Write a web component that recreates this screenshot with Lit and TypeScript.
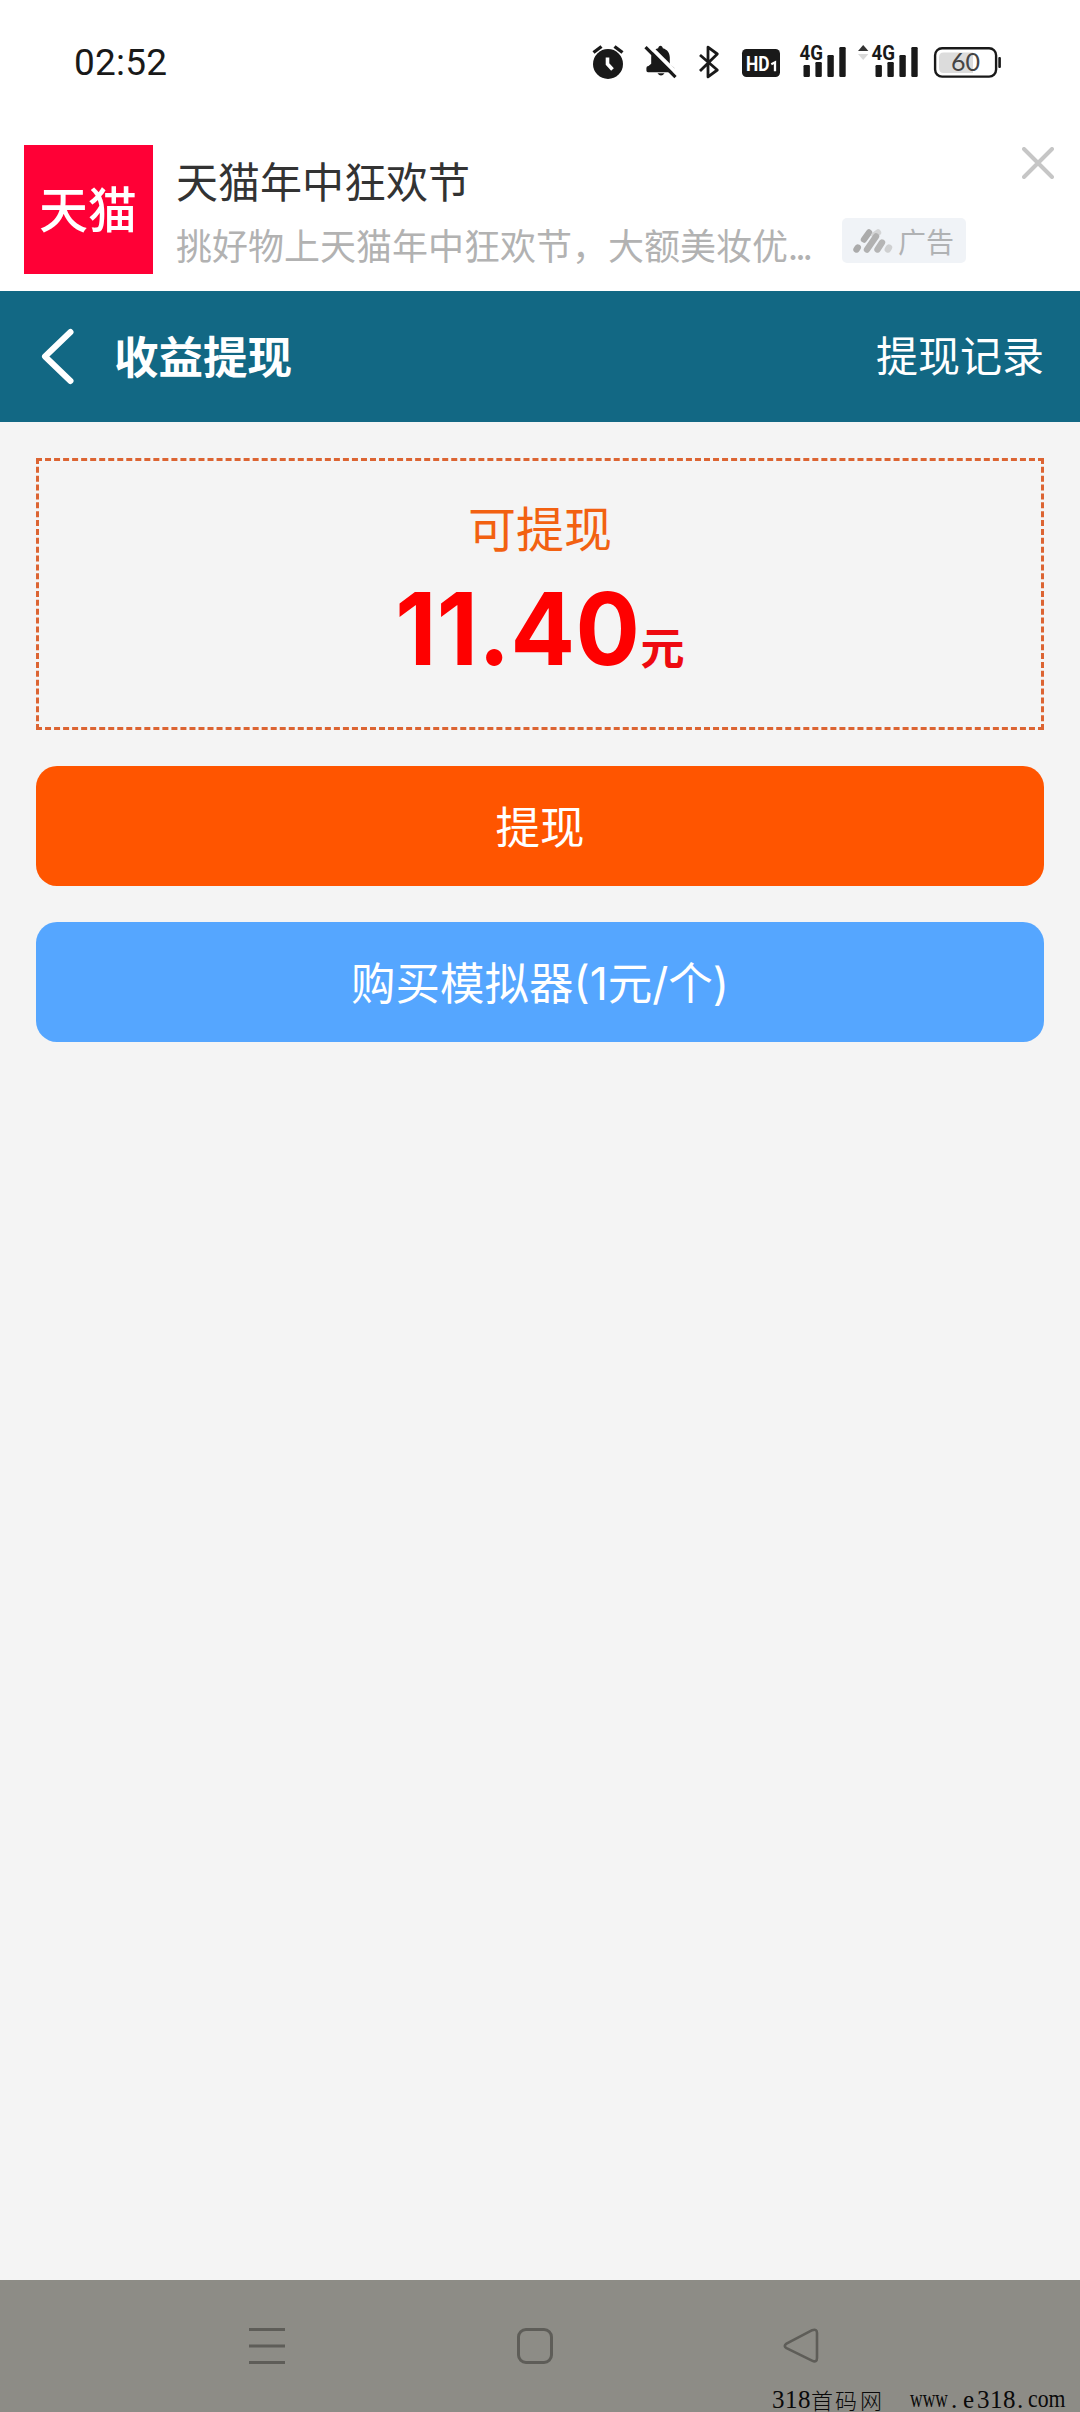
import { LitElement, html, css, svg } from "lit";
import { customElement } from "lit/decorators.js";

/** Status bar: clock on the left, device indicators on the right. */
@customElement("status-bar")
class StatusBar extends LitElement {
  static styles = css`
    :host {
      display: flex;
      box-sizing: border-box;
      height: 125px;
      padding: 42px 76px 0 74px;
      justify-content: space-between;
      align-items: flex-start;
      background: #fff;
      color: #191919;
    }
    .time {
      padding-top: 1px;
      font: 400 37px/40px Roboto, sans-serif;
      letter-spacing: 0.2px;
    }
    .icons {
      display: flex;
    }
    svg {
      display: block;
      height: 40px;
    }
    .hd {
      font: 700 21px Roboto, sans-serif;
    }
    .gen {
      font: 700 21px Roboto, sans-serif;
    }
    .level {
      font: 400 25px Lato, sans-serif;
    }
  `;

  private icon(x: number, width: number, body: unknown) {
    return html`<svg width=${width} viewBox="${x} 42 ${width} 40" fill="#191919">${body}</svg>`;
  }

  private bars(dx: number) {
    return svg`<g transform="translate(${dx} 0)">
      <text class="gen" x="799.5" y="60" textLength="23.5" lengthAdjust="spacingAndGlyphs">4G</text>
      <rect x="803.5" y="65" width="6.4" height="12" rx="1.2"/>
      <rect x="815.4" y="62" width="6.4" height="15" rx="1.2"/>
      <rect x="827.4" y="55" width="6.4" height="22" rx="1.2"/>
      <rect x="839.3" y="47" width="6.4" height="30" rx="1.2"/>
    </g>`;
  }

  render() {
    return html`
      <div class="time">02:52</div>
      <div class="icons">
        ${this.icon(588, 45, svg`
          <circle cx="608" cy="64" r="15"/>
          <path d="M593.5 52.5L601.5 46.5M622.5 52.5L614.5 46.5" stroke="#191919" stroke-width="3.4" fill="none"/>
          <path d="M607.5 57.5V64L612.5 69.5" stroke="#fff" stroke-width="3.6" fill="none"/>`)}
        ${this.icon(633, 55, svg`
          <path d="M658.2 48.2C658.4 44.8 662.6 44.8 662.8 48.2C667.5 49.6 669.8 53 669.8 57.5V64.5L672.5 66.5Q674.5 67 674.5 69V72.2H648Q646.4 72.2 646.4 70.5V68Q646.4 66.2 648.5 66L651.2 63.8V57.5C651.2 53 653.5 49.6 658.2 48.2Z"/>
          <path d="M657.5 73.3H664.5Q663 75.6 661 75.6Q659 75.6 657.5 73.3Z"/>
          <path d="M647.5 44.2L678.5 75" stroke="#fff" stroke-width="4"/>
          <path d="M645.5 47.2L675.5 77.2" stroke="#191919" stroke-width="3.2"/>`)}
        ${this.icon(688, 43, svg`
          <path d="M700 55L717.3 70L708 76.8V47.2L717.3 54L700 71" fill="none" stroke="#191919" stroke-width="2.8" stroke-linejoin="round"/>`)}
        ${this.icon(731, 59, svg`
          <rect x="742" y="49" width="38" height="28" rx="4.5"/>
          <text class="hd" x="746" y="71" fill="#fff" textLength="23.5" lengthAdjust="spacingAndGlyphs">HD</text>
          <path d="M771.3 64.2L775 62.3V71.2" fill="none" stroke="#fff" stroke-width="2.3"/>`)}
        ${this.icon(790, 61, this.bars(0))}
        ${this.icon(851, 75, svg`
          <path d="M858 51L863.2 45L868.4 51Z" fill="#333"/>
          <path d="M858 54L863.2 60L868.4 54Z" fill="#d9d9d9"/>
          ${this.bars(72)}`)}
        ${this.icon(926, 78, svg`
          <rect x="935.1" y="48.2" width="61" height="28.4" rx="7" fill="#fff" stroke="#191919" stroke-width="2.4"/>
          <path d="M943.5 52.5H973V73H943.5Q939 73 939 68V57.5Q939 52.5 943.5 52.5Z" fill="#dcdcdc"/>
          <rect x="998.3" y="57" width="2.6" height="11" rx="1"/>
          <text class="level" x="951" y="71.3" fill="#444">60</text>`)}
      </div>
    `;
  }
}

/** Promotional banner with a close control. */
@customElement("ad-banner")
class AdBanner extends LitElement {
  static styles = css`
    :host {
      display: flex;
      box-sizing: border-box;
      height: 166px;
      padding: 20px 26px 0 24px;
      background: #fff;
      font-family: "Noto Sans CJK SC", sans-serif;
    }
    .logo {
      display: flex;
      box-sizing: border-box;
      width: 129px;
      height: 129px;
      padding: 0 1px 5px 0;
      align-items: center;
      justify-content: center;
      background: #ff0036;
      color: #fff;
      font-size: 49px;
      line-height: 60px;
      font-weight: 500;
    }
    .copy {
      flex: 1;
      padding: 4px 0 0 23px;
    }
    .title {
      font-size: 42px;
      line-height: 62px;
      color: #333;
    }
    .row {
      display: flex;
      align-items: flex-start;
      height: 60px;
    }
    .desc {
      width: 666px;
      font-size: 36px;
      line-height: 66px;
      color: #b2b2b2;
      white-space: nowrap;
    }
    .dots {
      letter-spacing: -2.6px;
    }
    .chip {
      display: flex;
      box-sizing: border-box;
      width: 124px;
      height: 45px;
      margin-top: 7px;
      padding-left: 10px;
      gap: 4px;
      align-items: center;
      border-radius: 5px;
      background: #f0f3f7;
      color: #b0b2b4;
      font-size: 28px;
      line-height: 40px;
      white-space: nowrap;
    }
    .close {
      width: 32px;
      height: 32px;
      margin-top: 2px;
    }
    svg {
      display: block;
    }
  `;

  render() {
    return html`
      <div class="logo">天猫</div>
      <div class="copy">
        <div class="title">天猫年中狂欢节</div>
        <div class="row">
          <div class="desc">挑好物上天猫年中狂欢节，大额美妆优<span class="dots">...</span></div>
          <div class="chip">
            <svg width="42" height="26" viewBox="0 0 42 26" fill="none" stroke-linecap="round" stroke-width="6.4">
              <path d="M4.5 21.5L5.8 19.5" stroke="#ababab"/>
              <path d="M12 11.5L17 4.5" stroke="#ababab"/>
              <path d="M22.5 7L26 4.5" stroke="#d4d5d6"/>
              <path d="M15 21.5L24 8.5" stroke="#b1b1b1"/>
              <path d="M25.5 21.5L30 14.5" stroke="#b5b5b5"/>
              <path d="M35.8 21.5L37 19.5" stroke="#cfd0d1"/>
            </svg>
            <span>广告</span>
          </div>
        </div>
      </div>
      <svg class="close" viewBox="0 0 32 32" fill="none" stroke="#c6c6c6" stroke-width="4" stroke-linecap="round">
        <path d="M2 2L30 30M30 2L2 30" />
      </svg>
    `;
  }
}

/** Android three-button navigation. */
@customElement("nav-bar")
class NavBar extends LitElement {
  static styles = css`
    :host {
      display: block;
      position: relative;
      height: 132px;
      background: #8d8c86;
    }
    .keys {
      display: flex;
      padding: 46px 0 0 247px;
      gap: 228px;
    }
    svg {
      display: block;
    }
    .mark {
      position: absolute;
      right: 0;
      bottom: 0;
    }
    .mark text {
      font: 400 25px "Liberation Serif", "Noto Sans CJK SC", serif;
    }
    .mark .han {
      font-family: "Noto Sans CJK SC", sans-serif;
      font-size: 22px;
      font-weight: 300;
    }
  `;

  render() {
    return html`
      <div class="keys">
        <svg width="40" height="40" fill="none" stroke="#5e5d58" stroke-width="3">
          <path d="M2 3.5H38M2 20H38M2 36.5H38" />
        </svg>
        <svg width="40" height="40" fill="none" stroke="#5e5d58" stroke-width="3">
          <rect x="3.5" y="3.5" width="33" height="33" rx="7.5" />
        </svg>
        <svg width="40" height="40" fill="none" stroke="#5e5d58" stroke-width="2.6" stroke-linejoin="round">
          <path d="M29.2 4.2Q34 2.6 34 7V32Q34 37 29 34.6L3.5 22.2Q0 20 3.5 17.6Z" />
        </svg>
      </div>
      <svg class="mark" width="310" height="36" viewBox="770 2376 310 36" fill="#0a0a0a">
        <text y="2407.5"><tspan x="772 785 798">318</tspan><tspan class="han" y="2408.5" x="811 835 860">首码网</tspan></text>
        <text y="2407.5" transform="translate(910 0) scale(0.7 1)">www</text>
        <text y="2407.5" x="951 963 977 990 1003 1017">.e318.</text>
        <text y="2407.5" transform="translate(1028 0) scale(0.87 1)">com</text>
      </svg>
    `;
  }
}

@customElement("app-root")
class AppRoot extends LitElement {
  static styles = css`
    :host {
      display: flex;
      flex-direction: column;
      width: 1080px;
      height: 2412px;
      overflow: hidden;
      background: #f4f4f4;
      font-family: "Noto Sans CJK SC", sans-serif;
    }
    header {
      display: flex;
      box-sizing: border-box;
      height: 131px;
      padding: 0 36px 0 40px;
      align-items: center;
      background: #126884;
      color: #fff;
    }
    .back {
      display: block;
      margin-right: 39px;
    }
    h1 {
      flex: 1;
      margin: 0;
      padding-bottom: 3px;
      font-size: 44.5px;
      line-height: 64px;
      font-weight: 700;
    }
    .history {
      padding-bottom: 6px;
      font-size: 42px;
      line-height: 62px;
    }
    main {
      display: flex;
      flex: 1;
      flex-direction: column;
      gap: 36px;
      padding: 36px;
    }
    .balance {
      box-sizing: border-box;
      height: 272px;
      padding-top: 30px;
      border: 3px dashed #dc6432;
      text-align: center;
    }
    .label {
      font-size: 48px;
      line-height: 70px;
      color: #f26111;
    }
    .amount {
      display: flex;
      padding-top: 7px;
      justify-content: center;
      align-items: baseline;
      line-height: 120px;
      font-weight: 700;
      color: #fe0000;
    }
    .value {
      margin-left: -14px;
      font-family: Inter, sans-serif;
      font-size: 101px;
      letter-spacing: 0.4px;
      transform: scaleX(0.945);
      transform-origin: right;
    }
    .unit {
      font-size: 44px;
      color: #ee0a10;
    }
    button {
      height: 120px;
      padding: 3px 0 0;
      border: 0;
      border-radius: 21px;
      background: #ff5500;
      color: #fff;
      font: 400 44.5px/64px Inter, "Noto Sans CJK SC", sans-serif;
    }
    .buy {
      background: #55a6ff;
    }
  `;

  render() {
    return html`
      <status-bar></status-bar>
      <ad-banner></ad-banner>
      <header>
        <svg class="back" width="35" height="60" viewBox="0 0 35 60" fill="none" stroke="#fff" stroke-width="6" stroke-linecap="round" stroke-linejoin="round">
          <path d="M30.5 5L5 29.5L30.5 54" />
        </svg>
        <h1>收益提现</h1>
        <span class="history">提现记录</span>
      </header>
      <main>
        <section class="balance">
          <div class="label">可提现</div>
          <div class="amount"><span class="value">11.40</span><span class="unit">元</span></div>
        </section>
        <button>提现</button>
        <button class="buy">购买模拟器(1元/个)</button>
      </main>
      <nav-bar></nav-bar>
    `;
  }
}
